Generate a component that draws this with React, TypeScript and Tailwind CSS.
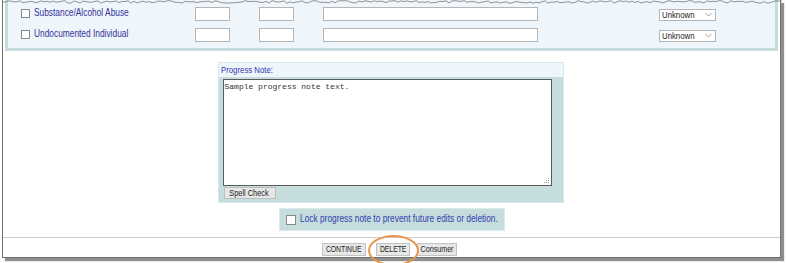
import React from "react";

function N({
  children,
  className = "",
  origin = "origin-left",
}: {
  children: React.ReactNode;
  className?: string;
  origin?: string;
}) {
  return (
    <span
      className={`inline-block whitespace-nowrap ${origin} scale-x-[0.82] font-['Liberation_Sans',Arial,sans-serif] leading-none ${className}`}
    >
      {children}
    </span>
  );
}

function Torn() {
  const pts: string[] = [];
  let seed = 7;
  const rnd = () => {
    seed = (seed * 9301 + 49297) % 233280;
    return seed / 233280;
  };
  for (let x = 2; x <= 784; x += 3) {
    pts.push(`${x},${(0.6 + rnd() * 2.6).toFixed(1)}`);
  }
  return (
    <svg className="absolute left-0 top-0" width="786" height="5" viewBox="0 0 786 5">
      <polyline points={pts.join(" ")} fill="none" stroke="#7a7a7a" strokeWidth="0.8" />
    </svg>
  );
}

function Check({ size = "w-[9px] h-[9px]" }: { size?: string }) {
  return <span className={`${size} shrink-0 border border-[#8a8a8a] bg-white block`} />;
}

function Chevron() {
  return (
    <svg width="7" height="5" viewBox="0 0 7 5" className="shrink-0">
      <polyline points="0.5,1 3.5,4 6.5,1" fill="none" stroke="#9a9a9a" strokeWidth="0.9" />
    </svg>
  );
}

function Row({ label }: { label: string }) {
  return (
    <div className="h-[21px] flex items-center">
      <div className="w-[174px] shrink-0 ml-[13px] flex items-center gap-[4px] overflow-visible">
        <Check />
        <N className="text-[10.2px] text-[#33339a]">{label}</N>
      </div>
      <span className="w-[35px] h-[14px] shrink-0 border border-[#b5b5b5] bg-white" />
      <span className="w-[35px] h-[14px] shrink-0 ml-[29px] border border-[#b5b5b5] bg-white" />
      <span className="w-[215px] h-[14px] shrink-0 ml-[29px] border border-[#b5b5b5] bg-white" />
      <div className="w-[57px] h-[12px] shrink-0 ml-[121px] mt-[2px] border border-[#b5b5b5] bg-white flex items-center justify-between pl-[2px] pr-[3px]">
        <N className="text-[9.5px] text-[#222]">Unknown</N>
        <Chevron />
      </div>
    </div>
  );
}

function Btn({ w, label, ml = "", size = "text-[8.3px]" }: { w: string; label: string; ml?: string; size?: string }) {
  return (
    <div className={`${w} ${ml} shrink-0 h-[13px] bg-[#e7e7e7] border border-[#c2c2c2] flex items-center justify-center`}>
      <N origin="origin-center" className={`${size} text-[#222]`}>
        {label}
      </N>
    </div>
  );
}

export default function App() {
  return (
    <div className="relative w-[786px] h-[263px] bg-white overflow-hidden">
      <div className="ml-[2px] w-[779px] h-[258px] bg-white border-l-[1.5px] border-r border-b border-[#707070] shadow-[3px_3px_1px_#8f8f8f] flex flex-col">
        {/* top panel */}
        <div className="mx-[2px] h-[51px] shrink-0 bg-[#eef5fb] border-l-[3px] border-r-[3px] border-b-[3px] border-[#c6dcdc] pt-[3px]">
          <Row label="Substance/Alcohol Abuse" />
          <Row label="Undocumented Individual" />
        </div>

        {/* progress note */}
        <div className="mt-[11px] self-center ml-[-2px] w-[346px] h-[141px] shrink-0 border border-[#d9e8e8] flex flex-col">
          <div className="h-[14px] bg-[#eef6fc] flex items-center pl-[2px]">
            <N className="text-[9.5px] text-[#3333b0]">Progress Note:</N>
          </div>
          <div className="flex-1 bg-[#c5dddd] pl-[4px] pr-[11px] pt-[2px] flex flex-col">
            <div className="relative h-[107px] bg-white border-[1.5px] border-[#5a5a5a] px-[1px] pt-[3px]">
              <span className="font-['Liberation_Mono',monospace] text-[8px] text-[#333] leading-none block">
                Sample progress note text.
              </span>
              <svg className="absolute right-[1px] bottom-[1px]" width="7" height="7" viewBox="0 0 7 7">
                <g fill="#9a9a9a">
                  <rect x="5" y="1" width="1" height="1" />
                  <rect x="3" y="3" width="1" height="1" />
                  <rect x="5" y="3" width="1" height="1" />
                  <rect x="1" y="5" width="1" height="1" />
                  <rect x="3" y="5" width="1" height="1" />
                  <rect x="5" y="5" width="1" height="1" />
                </g>
              </svg>
            </div>
            <div className="mt-[1px] ml-[1px] w-[52px] h-[12px] bg-[#e6e6e6] border border-[#bdbdbd] flex items-center justify-center">
              <N origin="origin-center" className="text-[9px] text-[#222]">Spell Check</N>
            </div>
          </div>
        </div>

        {/* lock */}
        <div className="mt-[5px] self-center ml-[1px] w-[226px] h-[23px] shrink-0 bg-[#c5dddd] border border-[#dce9e9] flex items-center pl-[6px] gap-[4px]">
          <Check size="w-[10px] h-[10px]" />
          <N className="text-[10.2px] text-[#3340b0]">Lock progress note to prevent future edits or deletion.</N>
        </div>

        {/* separator */}
        <div className="mt-[6px] h-px shrink-0 bg-[#cccccc]" />

        {/* buttons */}
        <div className="mt-[5px] flex justify-center ml-[-4px]">
          <Btn w="w-[44px]" label="CONTINUE" />
          <Btn w="w-[34px]" ml="ml-[10px]" label="DELETE" />
          <Btn w="w-[40px]" ml="ml-[7px]" label="Consumer" size="text-[8.7px]" />
        </div>
      </div>

      <Torn />

      {/* annotation circle */}
      <div className="absolute left-[368px] top-[235px] w-[51px] h-[31px] rounded-[50%] border-2 border-[#e8964a]" />
    </div>
  );
}
